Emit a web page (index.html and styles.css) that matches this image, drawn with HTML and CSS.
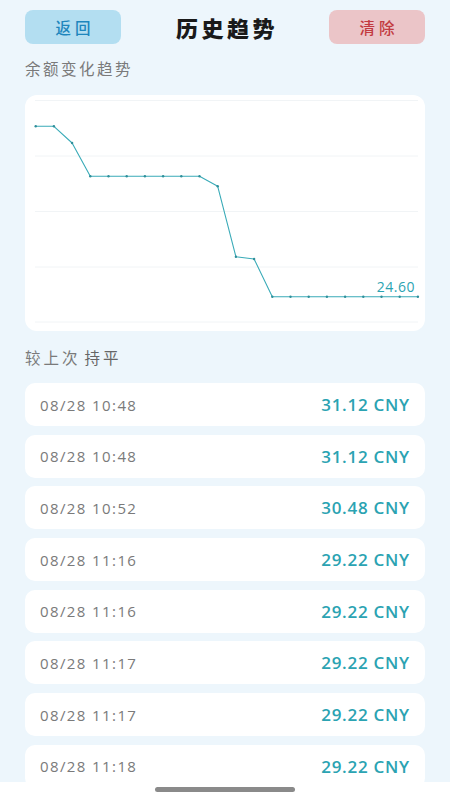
FILE: index.html
```html
<!DOCTYPE html>
<html lang="zh-CN">
<head>
<meta charset="utf-8">
<title>历史趋势</title>
<link rel="stylesheet" href="styles.css">
</head>
<body>
<div class="page">
  <header class="header">
    <button class="btn btn-back">返回</button>
    <h1 class="title">历史趋势</h1>
    <button class="btn btn-clear">清除</button>
  </header>

  <div class="section-label">余额变化趋势</div>

  <div class="chart-card">
    <svg class="chart" width="400" height="236" viewBox="0 0 400 236">
      <g stroke="#f1f4f6" stroke-width="1">
        <line x1="10" y1="5.5" x2="393" y2="5.5"/>
        <line x1="10" y1="61" x2="393" y2="61"/>
        <line x1="10" y1="116.5" x2="393" y2="116.5"/>
        <line x1="10" y1="172" x2="393" y2="172"/>
        <line x1="10" y1="227" x2="393" y2="227"/>
      </g>
      <polyline fill="none" stroke="#3aabb8" stroke-width="1.1" stroke-linejoin="round"
        points="10.7,31.3 28.9,31.3 47.1,48 65.3,81.3 83.5,81.3 101.7,81.3 119.9,81.3 138.1,81.3 156.3,81.3 174.5,81.3 192.7,91.3 210.9,161.7 229.1,164 247.3,201.7 265.5,201.7 283.7,201.7 301.9,201.7 320.1,201.7 338.3,201.7 356.5,201.7 374.7,201.7 392.9,201.7"/>
      <g fill="#2f8f9a">
        <circle cx="10.7" cy="31.3" r="1.2"/><circle cx="28.9" cy="31.3" r="1.2"/><circle cx="47.1" cy="48" r="1.2"/>
        <circle cx="65.3" cy="81.3" r="1.2"/><circle cx="83.5" cy="81.3" r="1.2"/><circle cx="101.7" cy="81.3" r="1.2"/>
        <circle cx="119.9" cy="81.3" r="1.2"/><circle cx="138.1" cy="81.3" r="1.2"/><circle cx="156.3" cy="81.3" r="1.2"/>
        <circle cx="174.5" cy="81.3" r="1.2"/><circle cx="192.7" cy="91.3" r="1.2"/><circle cx="210.9" cy="161.7" r="1.2"/>
        <circle cx="229.1" cy="164" r="1.2"/><circle cx="247.3" cy="201.7" r="1.2"/><circle cx="265.5" cy="201.7" r="1.2"/>
        <circle cx="283.7" cy="201.7" r="1.2"/><circle cx="301.9" cy="201.7" r="1.2"/><circle cx="320.1" cy="201.7" r="1.2"/>
        <circle cx="338.3" cy="201.7" r="1.2"/><circle cx="356.5" cy="201.7" r="1.2"/><circle cx="374.7" cy="201.7" r="1.2"/>
        <circle cx="392.9" cy="201.7" r="1.2"/>
      </g>
      <text x="390" y="197" text-anchor="end" class="chart-value">24.60</text>
    </svg>
  </div>

  <div class="compare"><span>较上次</span><span class="compare-state">持平</span></div>

  <ul class="records">
    <li class="record"><span class="time">08/28 10:48</span><span class="amount">31.12 CNY</span></li>
    <li class="record"><span class="time">08/28 10:48</span><span class="amount">31.12 CNY</span></li>
    <li class="record"><span class="time">08/28 10:52</span><span class="amount">30.48 CNY</span></li>
    <li class="record"><span class="time">08/28 11:16</span><span class="amount">29.22 CNY</span></li>
    <li class="record"><span class="time">08/28 11:16</span><span class="amount">29.22 CNY</span></li>
    <li class="record"><span class="time">08/28 11:17</span><span class="amount">29.22 CNY</span></li>
    <li class="record"><span class="time">08/28 11:17</span><span class="amount">29.22 CNY</span></li>
    <li class="record"><span class="time">08/28 11:18</span><span class="amount">29.22 CNY</span></li>
  </ul>
</div>

<div class="home-bar"><div class="home-indicator"></div></div>
</body>
</html>
```

FILE: styles.css
```css
* { box-sizing: border-box; }

html, body {
  margin: 0;
  padding: 0;
  height: 100%;
  overflow: hidden;
}

body {
  background: #edf6fc;
  font-family: "Noto Sans CJK SC", "Noto Sans", sans-serif;
  color: #222;
}

.page {
  padding: 10px 25px 0;
}

.header {
  display: flex;
  align-items: center;
  justify-content: space-between;
  height: 34px;
}

.btn {
  width: 96px;
  height: 34px;
  border: none;
  border-radius: 8px;
  font-family: "Noto Sans CJK SC", sans-serif;
  font-size: 15.5px;
  font-weight: 500;
  letter-spacing: 4px;
  padding: 0 0 0 4px;
  display: flex;
  align-items: center;
  justify-content: center;
}

.btn-back {
  background: #b3def1;
  color: #1e86bd;
}

.btn-clear {
  background: #ebc5c8;
  color: #c23a40;
}

.title {
  margin: 0;
  padding-left: 4px;
  font-size: 22px;
  font-weight: 900;
  color: #1a1a1a;
  letter-spacing: 3.5px;
  line-height: 34px;
}

.section-label {
  margin-top: 13px;
  font-size: 15.5px;
  letter-spacing: 2.5px;
  line-height: 22px;
  color: #7a7a7a;
}

.chart-card {
  margin-top: 16px;
  height: 236px;
  background: #ffffff;
  border-radius: 12px;
  overflow: hidden;
}

.chart {
  display: block;
}

.chart-value {
  font-family: "Open Sans", sans-serif;
  font-size: 14px;
  letter-spacing: 0.5px;
  fill: #2ba3b2;
}

.compare {
  margin-top: 15px;
  font-size: 15.5px;
  line-height: 22px;
  letter-spacing: 3px;
  color: #7a7a7a;
  display: flex;
  gap: 4px;
}

.compare-state {
  color: #666;
}

.records {
  list-style: none;
  margin: 15px 0 0;
  padding: 0;
  display: flex;
  flex-direction: column;
  gap: 8.7px;
}

.record {
  height: 43px;
  background: #ffffff;
  border-radius: 10px;
  display: flex;
  align-items: center;
  justify-content: space-between;
  padding: 0 16px 0 15px;
}

.time {
  font-family: "Open Sans", sans-serif;
  font-size: 15px;
  letter-spacing: 1.4px;
  color: #7a7a7a;
}

.amount {
  font-family: "Open Sans", sans-serif;
  font-size: 17px;
  font-weight: 600;
  color: #2ba3b2;
  letter-spacing: 0.7px;
  margin-right: -0.7px;
}

.home-bar {
  position: fixed;
  left: 0;
  right: 0;
  bottom: 0;
  height: 18px;
  background: #ffffff;
}

.home-indicator {
  position: absolute;
  left: 155px;
  top: 5px;
  width: 140px;
  height: 5px;
  border-radius: 3px;
  background: #8a8a8a;
}
```
